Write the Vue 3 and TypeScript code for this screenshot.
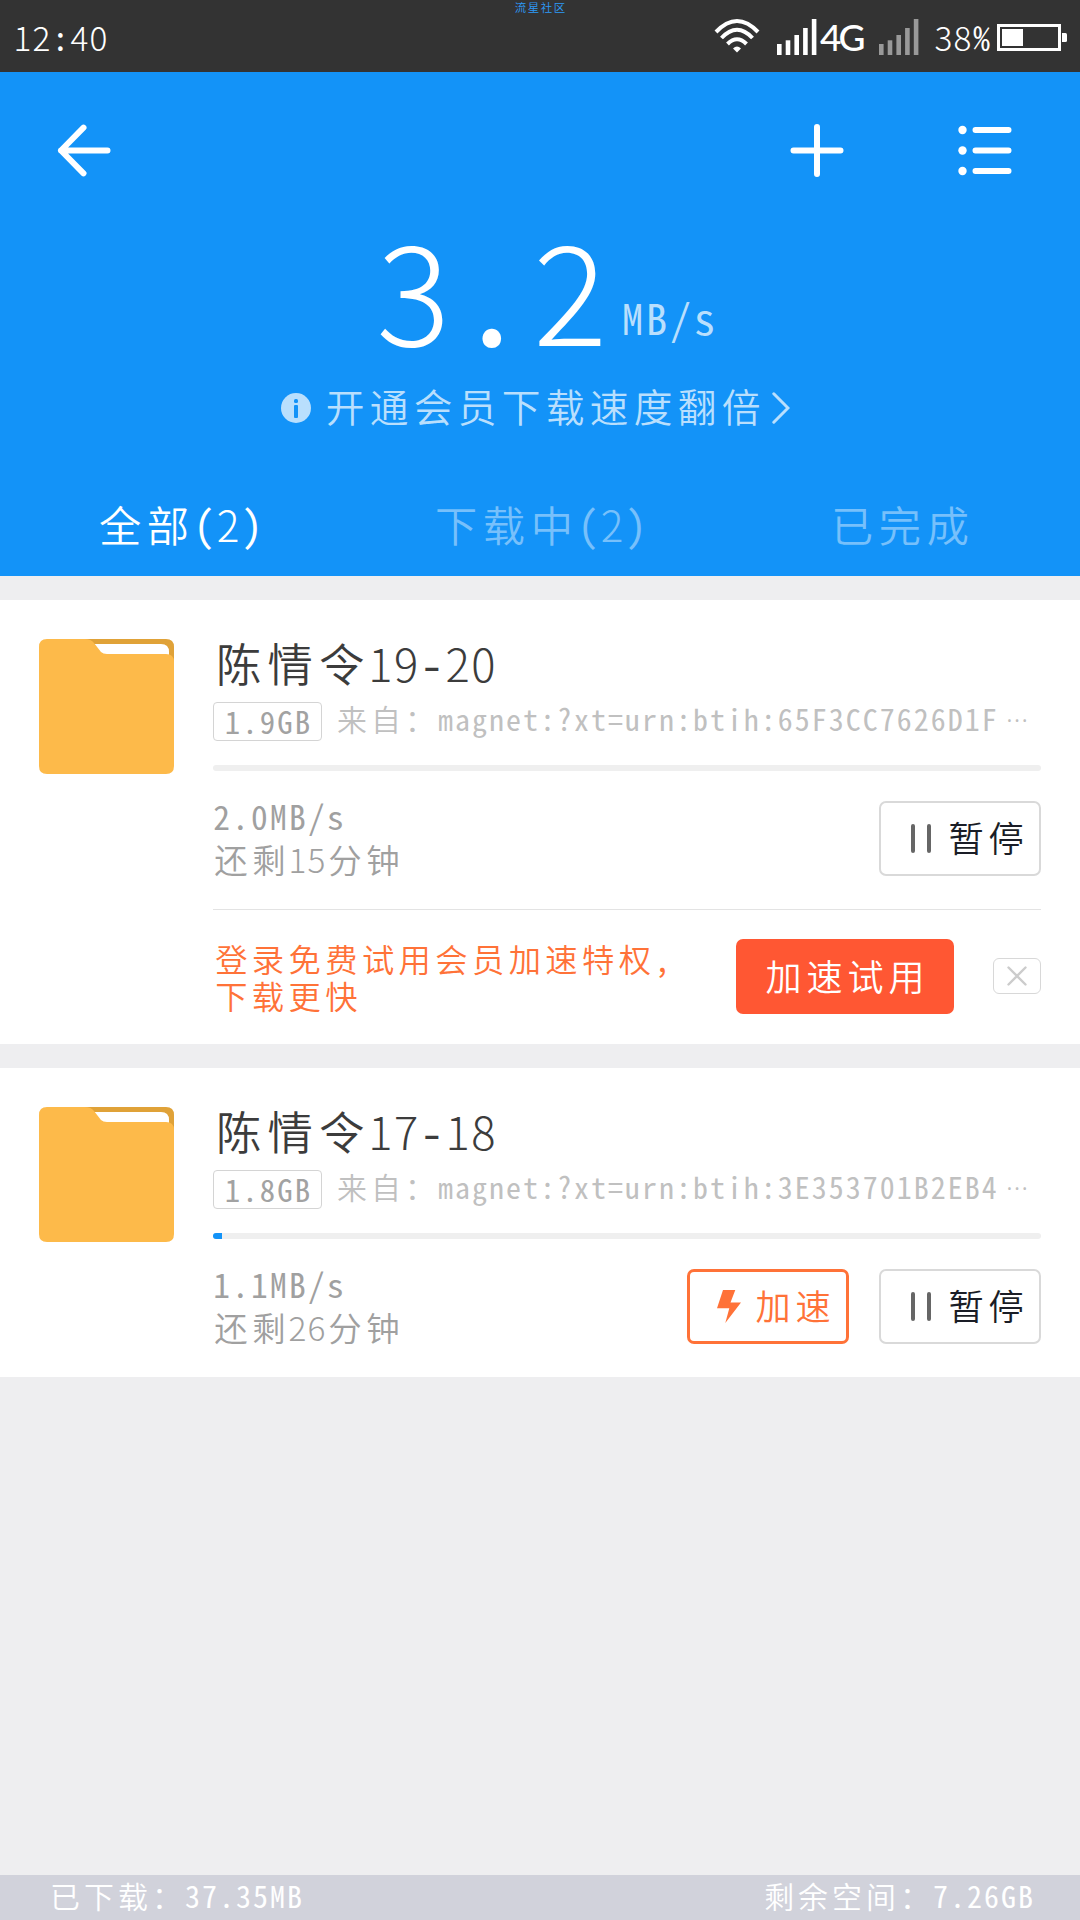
<script setup lang="ts">
import { h } from 'vue'
import type { FunctionalComponent } from 'vue'

interface Task {
  name: string
  size: string
  source: string
  progress: number
  speed: string
  remaining: string
  canBoost: boolean
  promo: boolean
}

const tasks: Task[] = [
  {
    name: '陈情令19-20',
    size: '1.9GB',
    source: '来自：magnet:?xt=urn:btih:65F3CC7626D1F…',
    progress: 0,
    speed: '2.0MB/s',
    remaining: '还剩15分钟',
    canBoost: false,
    promo: true,
  },
  {
    name: '陈情令17-18',
    size: '1.8GB',
    source: '来自：magnet:?xt=urn:btih:3E353701B2EB4…',
    progress: 1.1,
    speed: '1.1MB/s',
    remaining: '还剩26分钟',
    canBoost: true,
    promo: false,
  },
]

const tabs = [
  { label: '全部(2)', active: true },
  { label: '下载中(2)', active: false },
  { label: '已完成', active: false },
]

const signal = [
  { x: 0, y: 25 },
  { x: 8.7, y: 21.3 },
  { x: 17.4, y: 16 },
  { x: 26.1, y: 9 },
  { x: 34.8, y: 0 },
]

// Sets Chinese on a full-em pitch and Latin on a half-em pitch.
// Digits take the lighter face wherever no Latin letters stand beside them.
const Pitch: FunctionalComponent<{ text: string }> = (props) => {
  const hasLetters = /[A-Za-z]/.test(props.text)
  const pattern = hasLetters ? /[\x00-\x7f]+|…|[^\x00-\x7f…]+/g : /\d+|[^\d\x80-\uffff]+|[^\x00-\x7f]+/g
  const kind = (run: string) => {
    if (run === '…') return 'dots'
    if (run.charCodeAt(0) > 127) return 'full'
    return !hasLetters && /\d/.test(run) ? 'half digits' : 'half'
  }
  return h(
    'span',
    { class: 'pitch' },
    (props.text.match(pattern) ?? []).map((run) => h('span', { class: kind(run) }, run)),
  )
}
Pitch.props = ['text']
</script>

<template>
  <div class="screen">
    <div class="status">
      <Pitch class="clock" text="12:40" />
      <Pitch class="watermark" text="流星社区" />
      <div class="status-right">
        <svg class="wifi" width="46" height="36" viewBox="0 0 46 36" fill="none" stroke="#fff" stroke-width="4">
          <path d="M2 14 Q23 -8 44 14" />
          <path d="M7.500 20 Q23 3.500 38.500 20" />
          <path d="M13.500 26 Q23 16.500 32.500 26" />
          <path d="M19 30.500 Q23 26.500 27 30.500 L23 34.500 Z" fill="#fff" stroke="none" />
        </svg>
        <svg class="bars" width="40" height="36" viewBox="0 0 40 36" fill="#fff">
          <rect v-for="b in signal" :key="b.x" :x="b.x" :y="b.y" width="4.600" :height="36 - b.y" />
        </svg>
        <span class="net">4G</span>
        <svg class="bars dim" width="40" height="36" viewBox="0 0 40 36" fill="#999">
          <rect v-for="b in signal" :key="b.x" :x="b.x" :y="b.y" width="4.600" :height="36 - b.y" />
        </svg>
        <Pitch class="percent" text="38%" />
        <svg class="battery" width="70" height="27" viewBox="0 0 70 27">
          <rect x="1.500" y="1.500" width="61" height="24" fill="none" stroke="#fff" stroke-width="3" />
          <rect x="5" y="5" width="21" height="17" fill="#fff" />
          <path d="M65 9h3.500q1.500 0 1.500 1.500v6q0 1.500-1.500 1.500H65z" fill="#fff" />
        </svg>
      </div>
    </div>

    <header class="header">
      <div class="toolbar">
        <svg width="54" height="54" viewBox="0 0 54 54" fill="none" stroke="#fff" stroke-width="6" stroke-linecap="round" stroke-linejoin="round">
          <path d="M50.500 26.500H4M26.500 3.700L4 26.500L26.500 49.300" />
        </svg>
        <svg class="plus" width="54" height="54" viewBox="0 0 54 54" fill="none" stroke="#fff" stroke-width="6" stroke-linecap="round">
          <path d="M27 3V50M3.500 26.500H50.500" />
        </svg>
        <svg class="list" width="54" height="54" viewBox="0 0 54 54" fill="none" stroke="#fff" stroke-width="6" stroke-linecap="round">
          <path d="M17.500 6H50.500M17.500 26.500H50.500M17.500 47H50.500" />
          <g fill="#fff" stroke="none">
            <circle cx="4.500" cy="6" r="4.200" />
            <circle cx="4.500" cy="26.500" r="4.200" />
            <circle cx="4.500" cy="47" r="4.200" />
          </g>
        </svg>
      </div>
      <div class="speed">
        <Pitch class="value" text="3.2" />
        <Pitch class="unit" text="MB/s" />
      </div>
      <div class="tip">
        <svg class="info" width="30" height="30" viewBox="0 0 30 30">
          <circle cx="15" cy="15" r="15" fill="#b9dffd" />
          <rect x="13" y="6" width="4" height="4" rx="1.500" fill="#1393f8" />
          <rect x="13" y="12" width="4" height="13" rx="1" fill="#1393f8" />
        </svg>
        <Pitch class="tip-text" text="开通会员下载速度翻倍" />
        <svg class="chevron" width="18" height="32" viewBox="0 0 18 32" fill="none" stroke="#b9dffd" stroke-width="3" stroke-linecap="round">
          <path d="M1.800 1.800L16 16L1.800 30.200" />
        </svg>
      </div>
      <nav class="tabs">
        <div v-for="t in tabs" :key="t.label" class="tab" :class="{ active: t.active }">
          <Pitch :text="t.label" />
        </div>
      </nav>
    </header>

    <main class="tasks">
      <section v-for="task in tasks" :key="task.name" class="card">
        <svg class="folder" width="135" height="135" viewBox="0 0 135 135">
          <path d="M40 0H127Q135 0 135 8V40H40Z" fill="#e0a238" />
          <path d="M50 5H122Q130 5 130 13V30H50Z" fill="#fff" />
          <path d="M8 0H46Q52 0 55 4L62 13Q64 15 68 15H127Q135 15 135 23V127Q135 135 127 135H8Q0 135 0 127V8Q0 0 8 0Z" fill="#fdba4a" />
        </svg>
        <div class="body">
          <h2 class="name"><Pitch :text="task.name" /></h2>
          <div class="meta">
            <span class="badge"><Pitch :text="task.size" /></span>
            <Pitch class="source" :text="task.source" />
          </div>
          <div class="track"><div class="fill" :style="{ width: task.progress + '%' }"></div></div>
          <div class="actions">
            <div class="stats">
              <Pitch class="line" :text="task.speed" />
              <Pitch class="line" :text="task.remaining" />
            </div>
            <button v-if="task.canBoost" class="btn boost">
              <svg width="24" height="33" viewBox="0 0 24 33">
                <path d="M6 0H18.300L13.500 12.500H24L8.300 33L12.300 18.300H0Z" fill="#ff7238" />
              </svg>
              <Pitch class="label" text="加速" />
            </button>
            <button class="btn">
              <svg width="20" height="29" viewBox="0 0 20 29" stroke="#666" stroke-width="4" stroke-linecap="round">
                <path d="M2 2V27M18 2V27" />
              </svg>
              <Pitch class="label" text="暂停" />
            </button>
          </div>
          <div v-if="task.promo" class="promo">
            <div class="promo-text">
              <Pitch class="line" text="登录免费试用会员加速特权," />
              <Pitch class="line" text="下载更快" />
            </div>
            <button class="trial"><Pitch text="加速试用" /></button>
            <button class="close">
              <svg width="20" height="20" viewBox="0 0 20 20" stroke="#ccc" stroke-width="2.400" stroke-linecap="round">
                <path d="M1.500 1.500L18.500 18.500M18.500 1.500L1.500 18.500" />
              </svg>
            </button>
          </div>
        </div>
      </section>
    </main>

    <footer class="footer">
      <Pitch text="已下载：37.35MB" />
      <Pitch text="剩余空间：7.26GB" />
    </footer>
  </div>
</template>

<style>
body {
  background: #eeeef0;
}
.pitch {
  display: inline-block;
  white-space: nowrap;
  font-weight: 350;
}
.pitch .half {
  font-family: 'Noto Sans Mono CJK SC', 'Liberation Mono', monospace;
  font-size: 0.88em;
  letter-spacing: 0.0682em;
  margin: 0 -0.0341em 0 0.0341em;
}
.pitch .digits {
  font-family: 'Noto Sans CJK SC', sans-serif;
  font-weight: 300;
  letter-spacing: 0.033em;
  margin: 0 -0.0165em 0 0.0165em;
}
.pitch .full {
  font-family: 'Noto Sans CJK SC', sans-serif;
  font-size: 0.88em;
  letter-spacing: 0.1364em;
  margin: 0 -0.0682em 0 0.0682em;
}
.pitch .dots {
  position: relative;
  top: -0.45em;
  margin-left: 0.4em;
  font-family: 'Noto Sans CJK SC', sans-serif;
  font-size: 0.6em;
}
</style>

<style scoped>
.screen {
  width: 1080px;
  height: 1920px;
  display: flex;
  flex-direction: column;
  overflow: hidden;
  background: #eeeef0;
  font-family: 'Noto Sans CJK SC', sans-serif;
}
button {
  font: inherit;
  padding: 0;
  margin: 0;
  background: none;
  box-sizing: border-box;
}
.status {
  position: relative;
  height: 72px;
  flex: none;
  display: flex;
  justify-content: space-between;
  background: #333;
  color: #fff;
}
.clock {
  font-size: 38px;
  line-height: 72px;
  margin: -1px 0 0 13px;
}
.watermark {
  position: absolute;
  left: 514px;
  top: 0;
  font-size: 13px;
  line-height: 13px;
  color: #2d9bf8;
}
.status-right {
  display: flex;
  align-items: flex-start;
  padding-right: 13px;
}
.wifi {
  margin: 18px 17px 0 0;
}
.bars {
  margin-top: 19px;
}
.net {
  font: 500 37px/40px Lato, sans-serif;
  width: 46px;
  letter-spacing: -3px;
  margin: 17px 13px 0 3px;
}
.percent {
  font-size: 38px;
  line-height: 72px;
  margin: -1px 6px 0 15px;
}
.battery {
  margin-top: 24px;
}
.header {
  height: 504px;
  flex: none;
  display: flex;
  flex-direction: column;
  background: #1393f8;
  color: #fff;
}
.toolbar {
  display: flex;
  height: 157px;
  flex: none;
  padding: 52px 68px 0 57px;
  box-sizing: border-box;
}
.plus {
  margin-left: auto;
}
.list {
  margin-left: 114px;
}
.speed {
  display: flex;
  height: 140px;
  flex: none;
  padding-left: 374px;
  align-items: flex-start;
}
.value {
  font-size: 157px;
  line-height: 140px;
  margin-top: -21px;
}
.unit {
  font-size: 48px;
  line-height: 60px;
  margin: 55px 0 0 11px;
  color: #b9dffd;
}
.tip {
  display: flex;
  align-items: center;
  height: 74px;
  flex: none;
  padding-left: 281px;
  color: #b9dffd;
}
.info,
.chevron {
  margin-top: 3px;
}
.tip-text {
  font-size: 44px;
  line-height: 74px;
  margin: -5px 9px 0 12px;
}
.tabs {
  display: flex;
  margin-top: 28px;
  height: 100px;
}
.tab {
  flex: 1;
  text-align: center;
  font-size: 48px;
  line-height: 100px;
  color: #77c0fb;
}
.tab.active {
  color: #fff;
}
.tasks {
  flex: 1;
  display: flex;
  flex-direction: column;
  gap: 24px;
  padding-top: 24px;
}
.card {
  display: flex;
  align-items: flex-start;
  gap: 39px;
  padding: 39px 39px 33px;
  background: #fff;
}
.folder {
  flex: none;
}
.body {
  flex: 1;
  min-width: 0;
}
.name {
  margin: -5px 0 0;
  height: 68px;
  font-size: 51.5px;
  line-height: 52px;
  color: #3c3c3c;
}
.meta {
  display: flex;
  height: 39px;
  align-items: center;
  font-size: 34px;
}
.badge {
  box-sizing: border-box;
  width: 109px;
  height: 39px;
  border: 1px solid #d4d4d4;
  border-radius: 4px;
  text-align: center;
  line-height: 32px;
  font-size: 35px;
  color: #a2a2a2;
}
.source {
  margin: -4px 0 0 13px;
  line-height: 37px;
  color: #c0c0c0;
}
.track {
  margin-top: 24px;
  height: 6px;
  border-radius: 3px;
  background: #efefef;
  overflow: hidden;
}
.fill {
  height: 6px;
  background: #1393f8;
}
.actions {
  display: flex;
  gap: 30px;
  margin-top: 30px;
  height: 75px;
}
.stats {
  flex: 1;
  display: flex;
  flex-direction: column;
  font-size: 38px;
  line-height: 43px;
  color: #a0a0a0;
  margin: -9px 0 0 -1px;
}
.stats .line {
  height: 43px;
}
.btn {
  width: 162px;
  height: 75px;
  display: flex;
  align-items: center;
  padding-left: 30px;
  gap: 15px;
  border: 2px solid #d9d9d9;
  border-radius: 7px;
  font-size: 40px;
  line-height: 60px;
  color: #1a1d26;
}
.boost {
  border: 3px solid #ff7238;
  padding-left: 27px;
  gap: 12px;
  color: #ff7238;
}
.label {
  margin-top: -6px;
}
.promo {
  box-sizing: border-box;
  display: flex;
  align-items: center;
  margin-top: 33px;
  height: 135px;
  border-top: 1px solid #e3e3e3;
  margin-bottom: -33px;
}
.promo-text {
  flex: 1;
  display: flex;
  flex-direction: column;
  margin-top: -5px;
  font-size: 36.7px;
  line-height: 37px;
  color: #ff7238;
}
.promo-text .line {
  height: 37px;
}
.trial {
  width: 218px;
  height: 75px;
  margin-top: -2px;
  border: 0;
  border-radius: 7px;
  background: #ff5733;
  color: #fff;
  font-size: 41px;
  line-height: 67px;
  text-align: center;
}
.trial .pitch {
  margin-top: -6px;
  position: relative;
  top: -2px;
}
.close {
  width: 48px;
  height: 36px;
  margin: -2px 0 0 39px;
  display: flex;
  align-items: center;
  justify-content: center;
  border: 1px solid #d8d8d8;
  border-radius: 6px;
}
.footer {
  height: 45px;
  flex: none;
  display: flex;
  justify-content: space-between;
  padding: 0 46px 0 48px;
  font-size: 34px;
  line-height: 38px;
  background: #d1d2db;
  color: #fff;
}
</style>
